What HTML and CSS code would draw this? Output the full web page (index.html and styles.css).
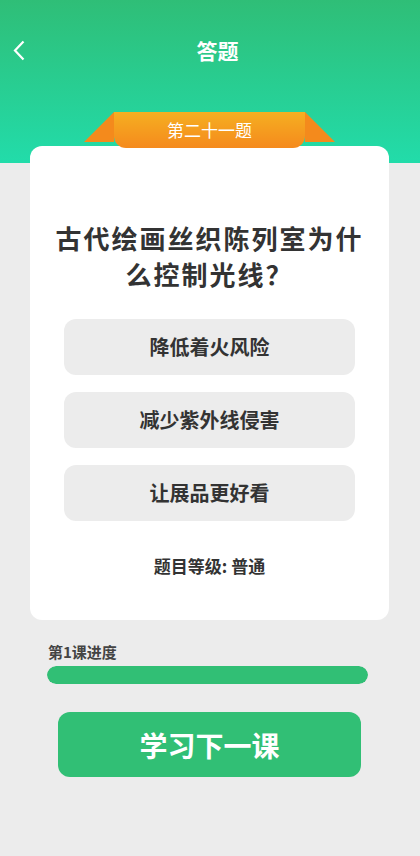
FILE: index.html
```html
<!DOCTYPE html>
<html lang="zh-CN">
<head>
  <meta charset="UTF-8" />
  <meta name="viewport" content="width=device-width, initial-scale=1.0"/>
  <title>答题</title>
  <link rel="stylesheet" href="styles.css">
</head>
<body>

<div class="header">
  <div class="top-bar">
    <span class="back">
      <svg width="12" height="21" viewBox="0 0 12 21"><path d="M10.5 1.5 L2 10.5 L10.5 19.5" fill="none" stroke="#fff" stroke-width="2.2"/></svg>
    </span>
    <h1 class="title">答题</h1>
  </div>
</div>

<div class="quiz-card">
  <div class="ribbon">
    <span class="ribbon-wing left"></span>
    <span class="ribbon-tab">第二十一题</span>
    <span class="ribbon-wing right"></span>
  </div>

  <h2 class="question">古代绘画丝织陈列室为什么控制光线？</h2>

  <div class="options">
    <div class="option">降低着火风险</div>
    <div class="option">减少紫外线侵害</div>
    <div class="option">让展品更好看</div>
  </div>

  <div class="level">题目等级: 普通</div>
</div>

<div class="progress">
  <div class="progress-label">第1课进度</div>
  <div class="progress-bar"><div class="progress-fill" style="width: 100%"></div></div>
</div>

<button type="button" class="next-btn">学习下一课</button>

</body>
</html>
```

FILE: styles.css
```css
body {
  margin: 0;
  background: #ececec;
  font-family: "Noto Sans CJK SC", "Noto Sans", sans-serif;
  color: #333;
}

.header {
  height: 163px;
  background: linear-gradient(to bottom, #2fbe77, #22dcaa);
}

.top-bar {
  display: flex;
  align-items: center;
  height: 50px;
  padding-top: 25px;
}

.back {
  display: flex;
  width: 14px;
  margin-left: 13px;
}

.title {
  flex: 1;
  margin: 0;
  padding-right: 12px;
  text-align: center;
  color: #fff;
  font-size: 21px;
  font-weight: 700;
}

.quiz-card {
  position: relative;
  margin: -17px 31px 0 30px;
  padding: 74px 20px 43px;
  background: #fff;
  border-radius: 12px;
}

.ribbon {
  position: absolute;
  top: -34px;
  left: 54px;
  display: flex;
  align-items: flex-start;
}

.ribbon-wing {
  width: 30px;
  height: 30px;
  background: #f48a1c;
}

.ribbon-wing.left {
  clip-path: polygon(100% 0, 100% 100%, 0 100%);
}

.ribbon-wing.right {
  clip-path: polygon(0 0, 100% 100%, 0 100%);
}

.ribbon-tab {
  width: 191px;
  height: 36px;
  line-height: 36px;
  text-align: center;
  color: #fff;
  font-size: 17px;
  background: linear-gradient(to bottom, #f5af21, #f58a1d);
  border-radius: 0 0 12px 12px;
}

.question {
  margin: 0;
  text-align: center;
  font-size: 26px;
  letter-spacing: 2px;
  line-height: 36px;
  font-weight: 700;
  color: #333;
}

.options {
  display: flex;
  flex-direction: column;
  gap: 17px;
  margin: 27px 14px 0;
}

.option {
  height: 56px;
  line-height: 56px;
  text-align: center;
  background: #ececec;
  border-radius: 12px;
  font-size: 20px;
  font-weight: 700;
  color: #333;
}

.level {
  margin-top: 34px;
  text-align: center;
  font-size: 17px;
  line-height: 22px;
  font-weight: 700;
  color: #333;
}

.progress {
  margin: 22px 52px 0 47px;
}

.progress-label {
  font-size: 15px;
  line-height: 20px;
  font-weight: 700;
  color: #444;
  padding-left: 1px;
}

.progress-bar {
  height: 18px;
  margin-top: 4px;
  background: #dcdcdc;
  border-radius: 9px;
  overflow: hidden;
}

.progress-fill {
  height: 100%;
  background: #31bf75;
  border-radius: 9px;
}

.next-btn {
  display: block;
  width: 303px;
  height: 65px;
  margin: 28px 0 0 58px;
  border: none;
  border-radius: 12px;
  background: #31bf75;
  color: #fff;
  font-family: inherit;
  font-size: 28px;
  font-weight: 700;
}
```
